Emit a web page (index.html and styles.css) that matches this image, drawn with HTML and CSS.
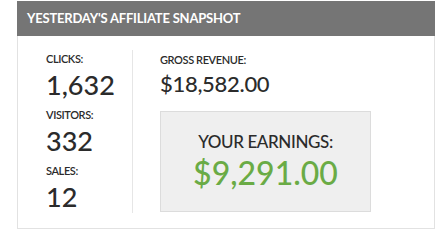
FILE: index.html
```html
<!DOCTYPE html>
<html>
  <head>
    <title>Affiliate Snapshot</title>
    <meta charset="utf8">
    <link rel="stylesheet" href="styles.css">
  </head>
  <body>
    <div class="snapshot">
      <h1 class="snapshot-title">YESTERDAY'S AFFILIATE SNAPSHOT</h1>
      <div class="snapshot-body">
        <div class="stats">
          <div class="label">CLICKS:</div>
          <div class="number">1,632</div>
          <div class="label">VISITORS:</div>
          <div class="number">332</div>
          <div class="label">SALES:</div>
          <div class="number">12</div>
        </div>
        <div class="revenue">
          <div class="label">GROSS REVENUE:</div>
          <div class="gross">$18,582.00</div>
          <div class="earnings">
            <div class="earnings-label">YOUR EARNINGS:</div>
            <div class="earnings-value">$9,291.00</div>
          </div>
        </div>
      </div>
    </div>
  </body>
</html>
```

FILE: styles.css
```css
body {
  margin: 0;
  background: #fff;
  font-family: 'Lato', sans-serif;
  font-weight: 500;
  color: #2b2b2b;
}

.snapshot {
  width: 418px;
  margin: 1px 0 0 17px;
}

.snapshot-title {
  margin: 0;
  height: 35px;
  padding-left: 10px;
  background-color: #757575;
  color: #fff;
  font-size: 13px;
  font-weight: bold;
  line-height: 35px;
  letter-spacing: -0.2px;
}

.snapshot-body {
  display: flex;
  padding: 14px 0 15px 28px;
  border: 1px solid #e2e2e2;
  border-top: 0;
}

.stats {
  width: 86px;
  height: 163px;
  border-right: 1px solid #e6e6e6;
}

.label {
  font-size: 11px;
  font-weight: 600;
  line-height: 13px;
  letter-spacing: -0.4px;
  margin-top: 2px;
}

.number {
  font-size: 27px;
  line-height: 30px;
  margin-top: 5px;
  margin-bottom: 8px;
}

.revenue {
  padding-left: 27px;
}

.revenue .label {
  margin-top: 3px;
}

.gross {
  font-size: 22px;
  line-height: 26px;
  margin-top: 5px;
  letter-spacing: -0.3px;
}

.earnings {
  width: 209px;
  height: 99px;
  margin-top: 14px;
  background-color: #efefef;
  border: 1px solid #dcdcdc;
  text-align: center;
}

.earnings-label {
  font-size: 17px;
  line-height: 20px;
  margin-top: 20px;
  letter-spacing: -0.4px;
}

.earnings-value {
  font-size: 32px;
  line-height: 34px;
  color: #6aab45;
  margin-top: 4px;
}
```
